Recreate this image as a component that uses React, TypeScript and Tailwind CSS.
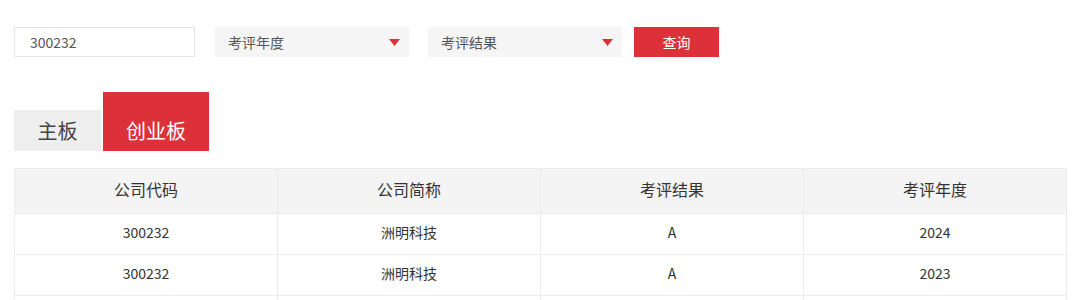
import { useState } from "react";

const rows = [
    { code: "300232", name: "洲明科技", result: "A", year: "2024" },
    { code: "300232", name: "洲明科技", result: "A", year: "2023" },
    { code: "300232", name: "洲明科技", result: "A", year: "2022" },
];

const Arrow = () => (
    <svg width="11" height="7" viewBox="0 0 11 7">
        <polygon points="0,0 11,0 5.5,7" fill="#dc3139" />
    </svg>
);

export default function App() {
    const [tab, setTab] = useState(1);

    return (
        <div className="w-[1080px] h-[300px] overflow-hidden bg-white text-[#333] font-['Noto_Sans_CJK_SC','Noto_Sans',sans-serif]">
            <div className="flex items-center pt-[27px] pl-[14px]">
                <input
                    defaultValue="300232"
                    className="w-[181px] h-[30px] border border-[#e5e5e5] pl-[15px] text-[14px] text-[#555] outline-none"
                />
                <div className="ml-[20px] w-[194px] h-[30px] bg-[#f5f5f5] flex items-center justify-between pl-[13px] pr-[9px] text-[14px] text-[#555]">
                    <span>考评年度</span>
                    <Arrow />
                </div>
                <div className="ml-[19px] w-[194px] h-[30px] bg-[#f5f5f5] flex items-center justify-between pl-[13px] pr-[9px] text-[14px] text-[#555]">
                    <span>考评结果</span>
                    <Arrow />
                </div>
                <button className="ml-[12px] w-[85px] h-[30px] bg-[#dc3139] text-white text-[14px]">查询</button>
            </div>

            <div className="flex items-end mt-[35px] pl-[14px] gap-[2px]">
                {["主板", "创业板"].map((t, i) => (
                    <div
                        key={t}
                        onClick={() => setTab(i)}
                        className={
                            tab === i
                                ? "h-[59px] w-[106px] bg-[#dc3139] text-white text-[20px] flex items-center justify-center pt-[18px]"
                                : "h-[41px] w-[87px] bg-[#eeeeee] text-[#444] text-[20px] flex items-center justify-center"
                        }
                    >
                        {t}
                    </div>
                ))}
            </div>

            <div className="mt-[17px] mx-[14px] w-[1053px]">
                <table className="w-full border-collapse table-fixed text-center">
                    <thead>
                        <tr className="bg-[#f4f4f4] h-[45px] text-[16px] text-[#333]">
                            <th className="font-normal border border-[#ececec] pb-[4px]">公司代码</th>
                            <th className="font-normal border border-[#ececec] pb-[4px]">公司简称</th>
                            <th className="font-normal border border-[#ececec] pb-[4px]">考评结果</th>
                            <th className="font-normal border border-[#ececec] pb-[4px]">考评年度</th>
                        </tr>
                    </thead>
                    <tbody>
                        {rows.map((r, i) => (
                            <tr key={i} className="h-[41px] text-[14px] text-[#333]">
                                <td className="border border-[#ececec] pb-[4px]">{r.code}</td>
                                <td className="border border-[#ececec] pb-[4px]">{r.name}</td>
                                <td className="border border-[#ececec] pb-[4px]">{r.result}</td>
                                <td className="border border-[#ececec] pb-[4px]">{r.year}</td>
                            </tr>
                        ))}
                    </tbody>
                </table>
            </div>
        </div>
    );
}
